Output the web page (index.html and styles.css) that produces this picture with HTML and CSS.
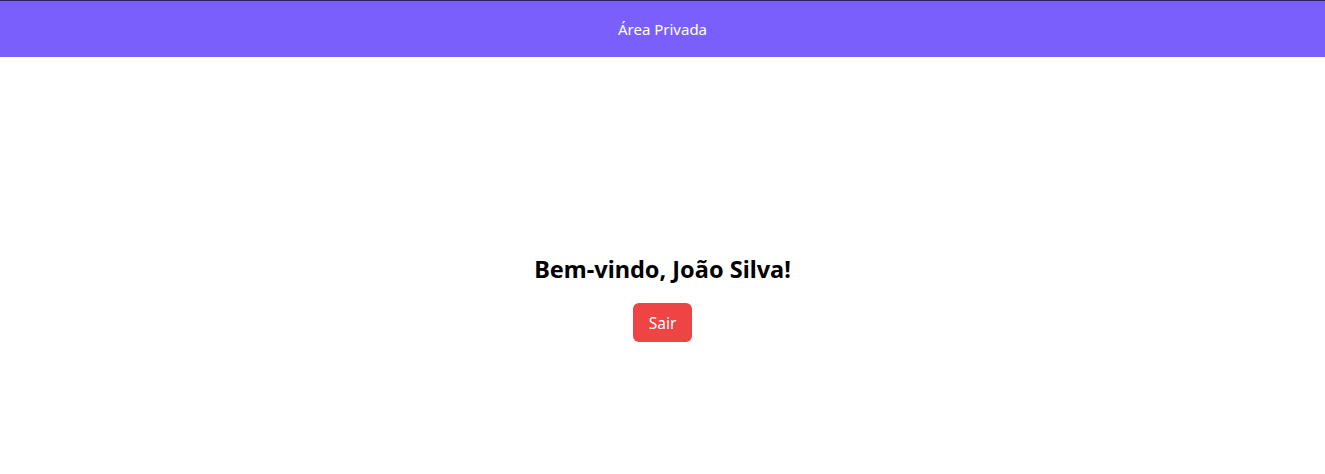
FILE: index.html
```html
<!DOCTYPE html>
<html lang="pt">
<head>
<meta charset="utf-8">
<title>Área Privada</title>
<link rel="stylesheet" href="styles.css">
</head>
<body>
<header class="topbar">Área Privada</header>
<main class="main">
  <h2 class="welcome">Bem-vindo, João Silva!</h2>
  <button class="logout">Sair</button>
</main>
</body>
</html>
```
FILE: styles.css
```css
* { box-sizing: border-box; }
html, body { margin: 0; padding: 0; }
body {
  font-family: "Noto Sans", "Open Sans", sans-serif;
  background: #ffffff;
  color: #000;
}
.topbar {
  border-top: 1px solid #2b2360;
  background: #7b5ffc;
  color: #ffffff;
  font-size: 15px;
  height: 57px;
  display: flex;
  align-items: center;
  justify-content: center;
  padding-bottom: 1px;
}
.main {
  height: 417px;
  display: flex;
  flex-direction: column;
  align-items: center;
  padding-top: 196px;
}
.welcome {
  margin: 0 0 18px;
  font-size: 23.5px;
  line-height: 32px;
  font-weight: 700;
}
.logout {
  font-family: inherit;
  font-size: 15.5px;
  line-height: 24px;
  color: #ffffff;
  background: #ef4444;
  border: none;
  border-radius: 6px;
  height: 39px;
  padding: 0 16px;
}
```
